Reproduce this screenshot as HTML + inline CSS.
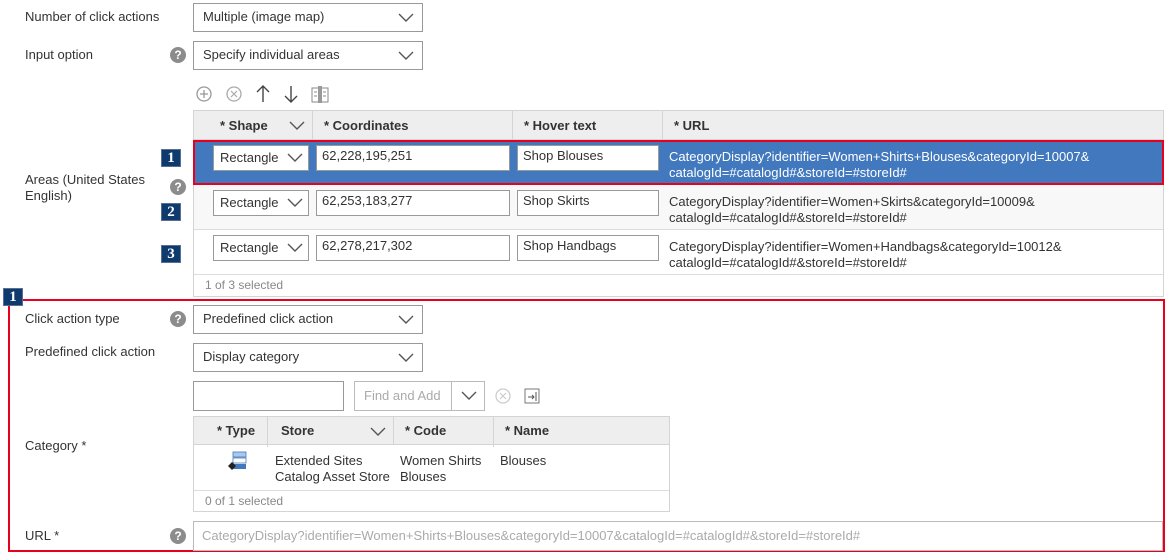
<!DOCTYPE html>
<html><head><meta charset="utf-8"><style>
*{box-sizing:border-box;margin:0;padding:0}
body{width:1171px;height:554px;background:#fff;font-family:"Liberation Sans",Arial,sans-serif;font-size:13px;color:#333;position:relative;overflow:hidden}
.a{position:absolute;white-space:nowrap}
.lbl{position:absolute;left:25px;line-height:16px}
.sel{position:absolute;border:1px solid #999;background:#fff;padding-left:9px;line-height:26px}
.chev{position:absolute;right:8px;top:50%;width:16px;height:9px;margin-top:-5px}
.q{position:absolute;width:16px;height:16px;border-radius:50%;background:#8c8c8c;color:#fff;font-weight:bold;font-size:12px;text-align:center;line-height:16px}
.inp{position:absolute;border:1px solid #999;background:#fff;padding:3px 5px;line-height:14px}
.badge{position:absolute;width:20px;height:18px;background:#0e3a6e;border:1px solid #5a6f8f;color:#fff;font-family:"Liberation Serif",serif;font-weight:bold;font-size:15px;text-align:center;line-height:16px}
.th{position:absolute;top:0;height:30px;line-height:30px;font-weight:bold;border-right:1px solid #d4d4d4;padding-left:11px}
</style></head><body>
<svg width="0" height="0" style="position:absolute"><defs><symbol id="cv" viewBox="0 0 16 9"><path d="M1 1l7 7 7-7" fill="none" stroke="#555" stroke-width="1.4"/></symbol></defs></svg>

<div class="lbl" style="top:9px">Number of click actions</div>
<div class="sel" style="left:193px;top:3px;width:230px;height:29px">Multiple (image map)<svg class="chev"><use href="#cv"/></svg></div>
<div class="lbl" style="top:47px">Input option</div>
<div class="q" style="left:170px;top:47px">?</div>
<div class="sel" style="left:193px;top:41px;width:230px;height:29px">Specify individual areas<svg class="chev"><use href="#cv"/></svg></div>

<svg class="a" style="left:194px;top:84px" width="140" height="20">
<circle cx="10" cy="10" r="7" fill="none" stroke="#999" stroke-width="1.3"/><path d="M10 6v8M6 10h8" stroke="#999" stroke-width="1.3"/>
<circle cx="40" cy="10" r="7" fill="none" stroke="#aaa" stroke-width="1.3"/><path d="M37 7l6 6M43 7l-6 6" stroke="#aaa" stroke-width="1.2"/>
<path d="M69 2v16M63 8l6-6 6 6" fill="none" stroke="#444" stroke-width="1.4"/>
<path d="M97 2v16M91 12l6 6 6-6" fill="none" stroke="#444" stroke-width="1.4"/>
<rect x="118" y="4" width="16" height="14" fill="none" stroke="#888"/><rect x="124" y="2" width="4" height="17" fill="#999"/><path d="M120 8h3M120 12h3M129 8h3M129 12h3" stroke="#888"/>
</svg>

<!-- table 1 -->
<div class="a" style="left:193px;top:110px;width:971px;height:187px;border:1px solid #d4d4d4"></div>
<div class="a" style="left:194px;top:111px;width:969px;height:29px;background:#eee;border-bottom:1px solid #d4d4d4">
 <div class="th" style="left:0;width:119px;padding-left:26px">* Shape<svg class="chev" style="right:7px;width:16px;height:9px"><use href="#cv"/></svg></div>
 <div class="th" style="left:119px;width:200px">* Coordinates</div>
 <div class="th" style="left:319px;width:150px">* Hover text</div>
 <div class="th" style="left:469px;width:500px;border:none">* URL</div>
</div>
<div class="a" style="left:194px;top:185px;width:969px;height:45px;background:#f8f8f8;border-bottom:1px solid #ddd"></div>
<div class="a" style="left:194px;top:230px;width:969px;height:45px;border-bottom:1px solid #ddd"></div>
<div class="a" style="left:193px;top:140px;width:971px;height:45px;background:#4178be;border:2px solid #e8001c"></div>

<div class="sel" style="left:213px;top:145px;width:96px;height:26px;line-height:24px;padding-left:6px">Rectangle<svg class="chev" style="right:5px"><use href="#cv"/></svg></div>
<div class="inp" style="left:316px;top:145px;width:194px;height:26px">62,228,195,251</div>
<div class="inp" style="left:517px;top:145px;width:142px;height:26px">Shop Blouses</div>
<div class="a" style="left:669px;top:149px;color:#fff;line-height:16px">CategoryDisplay?identifier=Women+Shirts+Blouses&amp;categoryId=10007&amp;<br>catalogId=#catalogId#&amp;storeId=#storeId#</div>

<div class="sel" style="left:213px;top:190px;width:96px;height:26px;line-height:24px;padding-left:6px">Rectangle<svg class="chev" style="right:5px"><use href="#cv"/></svg></div>
<div class="inp" style="left:316px;top:190px;width:194px;height:26px">62,253,183,277</div>
<div class="inp" style="left:517px;top:190px;width:142px;height:26px">Shop Skirts</div>
<div class="a" style="left:669px;top:194px;line-height:16px">CategoryDisplay?identifier=Women+Skirts&amp;categoryId=10009&amp;<br>catalogId=#catalogId#&amp;storeId=#storeId#</div>

<div class="sel" style="left:213px;top:235px;width:96px;height:26px;line-height:24px;padding-left:6px">Rectangle<svg class="chev" style="right:5px"><use href="#cv"/></svg></div>
<div class="inp" style="left:316px;top:235px;width:194px;height:26px">62,278,217,302</div>
<div class="inp" style="left:517px;top:235px;width:142px;height:26px">Shop Handbags</div>
<div class="a" style="left:669px;top:239px;line-height:16px">CategoryDisplay?identifier=Women+Handbags&amp;categoryId=10012&amp;<br>catalogId=#catalogId#&amp;storeId=#storeId#</div>
<div class="a" style="left:205px;top:278px;font-size:12px;color:#888">1 of 3 selected</div>

<div class="badge" style="left:161px;top:149px">1</div>
<div class="badge" style="left:161px;top:203px">2</div>
<div class="badge" style="left:161px;top:245px">3</div>
<div class="lbl" style="top:172px">Areas (United States<br>English)</div>
<div class="q" style="left:170px;top:179px">?</div>

<!-- red box -->
<div class="a" style="left:8px;top:299px;width:1157px;height:253px;border:2px solid #e8001c"></div>
<div class="badge" style="left:3px;top:288px">1</div>

<div class="lbl" style="top:311px">Click action type</div>
<div class="q" style="left:170px;top:311px">?</div>
<div class="sel" style="left:193px;top:305px;width:230px;height:29px">Predefined click action<svg class="chev"><use href="#cv"/></svg></div>
<div class="lbl" style="top:344px">Predefined click action</div>
<div class="sel" style="left:193px;top:343px;width:230px;height:29px">Display category<svg class="chev"><use href="#cv"/></svg></div>

<div class="inp" style="left:193px;top:381px;width:151px;height:30px"></div>
<div class="a" style="left:354px;top:381px;width:131px;height:30px;border:1px solid #bbb;color:#aaa;line-height:28px;padding-left:9px">Find and Add<div class="a" style="left:96px;top:0;width:1px;height:28px;background:#bbb"></div><svg class="chev" style="right:7px;width:16px"><use href="#cv"/></svg></div>
<svg class="a" style="left:494px;top:387px" width="50" height="20"><circle cx="9" cy="9" r="7" fill="none" stroke="#ccc" stroke-width="1.3"/><path d="M6 6l6 6M12 6l-6 6" stroke="#ccc" stroke-width="1.2"/><rect x="31" y="2" width="14" height="14" fill="none" stroke="#777"/><path d="M34 10h6M38 8l2 2-2 2M42 5v9" fill="none" stroke="#555"/></svg>

<div class="lbl" style="top:438px">Category *</div>
<div class="a" style="left:193px;top:416px;width:477px;height:96px;border:1px solid #d4d4d4"></div>
<div class="a" style="left:194px;top:417px;width:475px;height:28px;background:#eee;border-bottom:1px solid #d4d4d4">
 <div class="th" style="left:0;width:74px;line-height:28px;padding-left:23px">* Type</div>
 <div class="th" style="left:74px;width:126px;line-height:28px;padding-left:13px">Store<svg class="chev" style="right:7px"><use href="#cv"/></svg></div>
 <div class="th" style="left:200px;width:100px;line-height:28px;padding-left:11px">* Code</div>
 <div class="th" style="left:300px;width:175px;line-height:28px;border:none;padding-left:11px">* Name</div>
</div>
<div class="a" style="left:194px;top:490px;width:475px;height:1px;background:#ddd"></div>
<svg class="a" style="left:227px;top:451px" width="24" height="24"><rect x="6" y="1" width="13" height="5" fill="#a8c8ee" stroke="#4178be" stroke-width=".8"/><rect x="6" y="7" width="13" height="5" fill="#fff" stroke="#4178be" stroke-width=".8"/><rect x="6" y="13" width="13" height="5" fill="#4178be"/><path d="M5 11l4 4-4 4-4-4z" fill="#222"/></svg>
<div class="a" style="left:275px;top:453px;line-height:16px">Extended Sites<br>Catalog Asset Store</div>
<div class="a" style="left:393px;top:445px;width:7px;height:45px;background:#fff"></div>
<div class="a" style="left:400px;top:453px;line-height:16px">Women Shirts<br>Blouses</div>
<div class="a" style="left:500px;top:453px;line-height:16px">Blouses</div>
<div class="a" style="left:205px;top:494px;font-size:12px;color:#888">0 of 1 selected</div>

<div class="lbl" style="top:528px">URL *</div>
<div class="q" style="left:170px;top:528px">?</div>
<div class="a" style="left:193px;top:521px;width:970px;height:30px;border:1px solid #bbb;color:#aaa;line-height:28px;padding-left:8px">CategoryDisplay?identifier=Women+Shirts+Blouses&amp;categoryId=10007&amp;catalogId=#catalogId#&amp;storeId=#storeId#</div>
</body></html>
